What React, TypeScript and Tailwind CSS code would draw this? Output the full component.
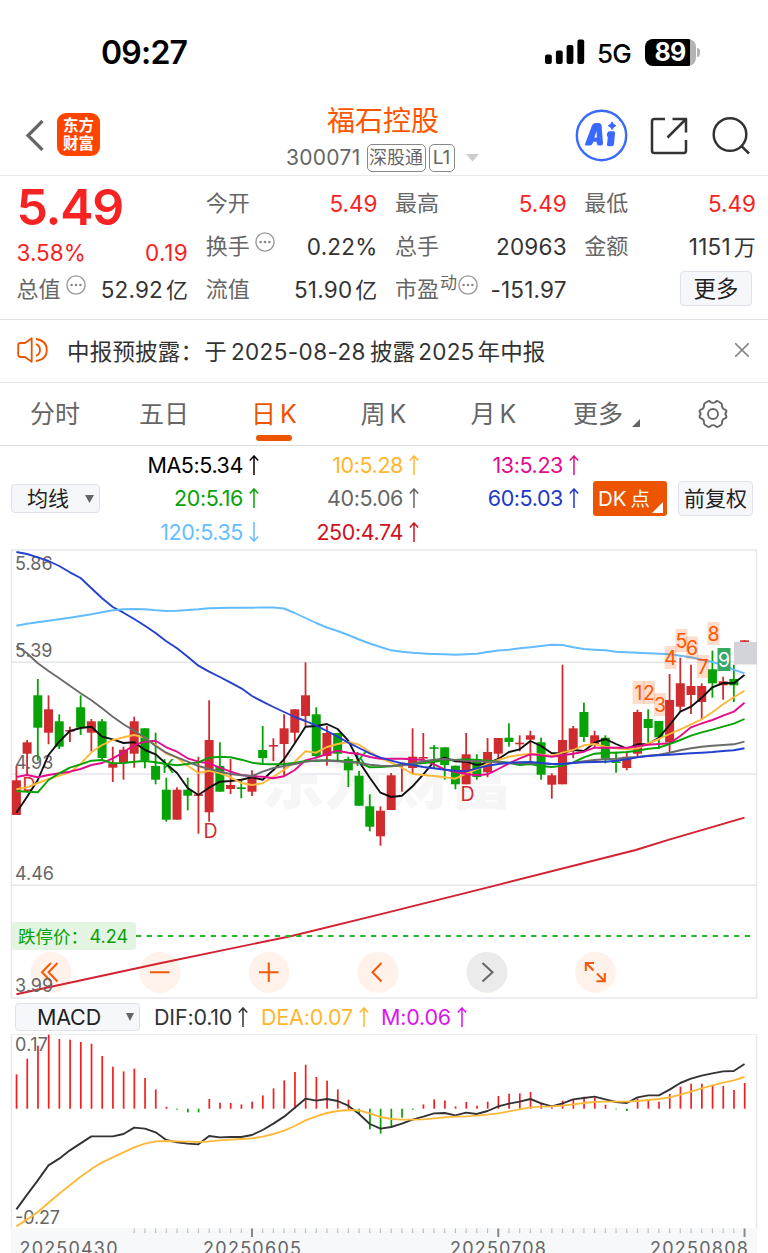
import React from 'react';

type Candle = ['r' | 'g', number, number, number, number];

const UP = '#d02c2f';
const DOWN = '#06a206';

// x of the n-th trading day
const dayX = (i: number) => 16.4 + i * 10.708;

// [colour, high, body top, body bottom, low]
const candles: Candle[] = [
  ['r', 766, 780.3, 815, 815], ['r', 740, 742.3, 753.7, 775], ['g', 679, 695.3, 727.7, 760.7],
  ['r', 695.3, 709.3, 732.7, 744.3], ['g', 714.3, 721.3, 746.7, 749], ['r', 726.7, 730, 731.5, 742],
  ['g', 695.3, 707.3, 727.7, 735], ['r', 719, 721.3, 732.7, 751.7], ['g', 719, 721.3, 758, 760],
  ['r', 746.7, 763.3, 767.7, 782], ['r', 746.7, 749.7, 763, 779.7], ['r', 716.7, 721.3, 753.7, 767.7],
  ['g', 728.3, 728.3, 760.7, 768.3], ['g', 732.7, 766, 779.7, 784.3], ['g', 777.7, 789.7, 819.7, 821.7],
  ['r', 787.3, 789.7, 819.7, 819.7], ['g', 777.7, 789.7, 795.7, 810.3], ['r', 756.7, 794.3, 795.7, 833.7],
  ['r', 700.3, 740, 812.3, 821.7], ['g', 742.3, 766, 791.7, 791.7], ['r', 759, 785, 789, 794],
  ['g', 780.3, 787.3, 789, 798.3], ['r', 770.3, 775, 791.7, 796], ['g', 726, 750, 758, 765],
  ['r', 738.3, 745, 746.5, 761], ['r', 714.3, 728.3, 744, 775.7], ['r', 709.3, 709.3, 732.7, 742.7],
  ['r', 662.3, 695.3, 716, 726], ['g', 707.3, 714.3, 756, 758.3], ['r', 726, 733, 756, 765.7],
  ['g', 733, 733, 753.7, 760], ['g', 756.7, 759, 770.3, 787], ['g', 771, 775.7, 805.7, 805.7],
  ['g', 794.3, 806.3, 826.7, 831.3], ['r', 806.3, 810.7, 836.3, 845.7], ['r', 773, 775.3, 810, 810],
  ['r', 763.3, 763.7, 764.5, 791.7], ['r', 728.3, 756.7, 768, 774.3], ['r', 733, 757, 758.5, 763.7],
  ['g', 745, 747.3, 748.7, 768.3], ['g', 747.3, 747.3, 765, 779.7], ['g', 765.7, 765.7, 784.3, 789.3],
  ['r', 733, 754.3, 784.3, 784.3], ['g', 754.3, 759, 777, 779.7], ['r', 738, 752, 772.3, 777.3],
  ['r', 738, 738, 753.7, 760], ['g', 723.3, 737.7, 742, 746.7], ['r', 735.3, 742.7, 744, 751.3],
  ['r', 730.7, 735.3, 739.7, 763.3], ['g', 737.7, 742.3, 774.7, 779.7], ['r', 773.3, 775.3, 784.7, 798.7],
  ['r', 664.7, 740, 784.3, 784.3], ['r', 726, 728.3, 749.7, 758.3], ['g', 702.7, 712, 737, 742],
  ['r', 730.7, 735.3, 744, 748.3], ['g', 735.3, 737.7, 758.7, 763.3], ['g', 751.7, 761.3, 763, 772.7],
  ['r', 751.7, 756.7, 768, 770.3], ['r', 709.7, 712, 753.7, 756], ['g', 709.3, 719, 728, 743.3],
  ['g', 721, 721, 737.3, 749], ['r', 674, 700, 742.3, 753.3], ['r', 657.7, 683.3, 706.7, 711.7],
  ['r', 664.7, 686, 695, 714], ['r', 683.3, 686, 702, 720], ['g', 650.7, 669.3, 683.3, 697.7],
  ['r', 676.7, 681.3, 685.3, 699.7], ['g', 664.7, 679, 685.3, 702], ['r', 640.3, 640.3, 641.8, 641.8],
];

const ma5 = [812.7, 796.7, 780, 755, 741.7, 731, 728, 726.7, 736.7, 739.3, 743, 742.3, 750, 754.3, 764, 773, 788, 795, 787.7, 781.7, 781, 779.7, 777.3, 779.7, 770, 759.3, 743.3, 726.7, 726, 724, 729, 740.7, 761.7, 777.7, 792.7, 797, 795.7, 786.3, 774.3, 761.7, 757.7, 761.3, 761.7, 765, 763.3, 759, 752, 749.3, 741, 746, 753.3, 753, 750, 751, 742.7, 739, 744, 748.7, 744.3, 744, 737.7, 725, 711.7, 706.7, 697.7, 687.3, 683, 683.3, 675];
const ma10 = [789.3, 787.3, 783, 779, 775.7, 772.3, 764, 752.3, 745, 740, 737.3, 735, 737.7, 745, 753.7, 757.7, 765.7, 773, 770.7, 773, 777.3, 783, 785, 783.3, 776.7, 769.7, 761.7, 751.3, 752.7, 747, 744, 742, 744.7, 751.7, 758.3, 762.7, 767.7, 774, 775, 776, 777.3, 778.7, 773.7, 769.3, 763.3, 760, 756.7, 755, 753.7, 754.7, 755.7, 752.7, 750, 745.3, 744, 746.7, 748.3, 749.3, 748.3, 743.3, 739, 734, 729.3, 724.3, 719.3, 712.3, 704.3, 697.3, 690.7];
const ma13 = [777, 775, 777.3, 775, 773.3, 771.7, 769, 765, 763, 758.3, 752.3, 745, 741.7, 740.7, 747.3, 751.7, 758.3, 761.7, 763.3, 767.7, 771.7, 775, 776.3, 776.7, 778.3, 776.3, 770, 760.3, 757.7, 754, 750.7, 752.7, 754, 757, 758.7, 758.7, 758.7, 759.3, 760, 764.3, 769.3, 772, 774, 775.3, 774.3, 769, 763.3, 758.3, 754.3, 755.3, 756.7, 755.3, 753.7, 751.7, 747.7, 747.7, 747.7, 747.7, 746.3, 744.7, 744, 743.3, 736, 727.3, 723.3, 720, 715.7, 711.7, 702.7];
const ma20 = [791, 791.7, 792.3, 780, 773.3, 767.7, 764.3, 760.7, 760, 763.3, 763, 761.7, 761, 762.3, 764, 765.3, 764, 762.3, 757.7, 756.7, 757.3, 759.7, 762.7, 764, 764.3, 764, 763, 761, 761, 760.3, 760.7, 761.7, 762.3, 767.3, 767, 766.3, 765, 764, 763, 761.7, 760.3, 760, 759.3, 760, 760.7, 761.7, 762.7, 765, 764, 766, 767, 765.7, 762.3, 757.3, 753.7, 752.7, 752.7, 752, 750.7, 748.7, 747.7, 744, 740, 735.7, 732.3, 729.7, 726.7, 723.7, 719];
const ma40 = [646, 653.3, 663.3, 671, 678.3, 685.7, 693.3, 700.3, 708.3, 716.7, 724.3, 730.7, 737.7, 746, 752.7, 757.3, 761.7, 766, 769, 771.7, 774, 775.3, 776, 771.7, 768, 766, 764, 761.7, 760.3, 760.7, 761.3, 762, 763, 764.7, 765.7, 766, 765.3, 763.7, 761.3, 759.7, 759, 760, 760.7, 761, 761.7, 761.7, 763.3, 763.3, 763, 763.3, 764, 763.7, 762.7, 761.3, 760, 759.3, 758.7, 757.7, 757, 755.7, 754.7, 752.7, 750.3, 748.3, 746.7, 745.7, 745, 744.3, 741.7];
const ma60 = [552, 554, 557.3, 561, 566, 572.3, 578, 588.3, 598.3, 607, 612.7, 619, 625.7, 633, 641.3, 648.3, 656.7, 665.7, 671.7, 677, 682.7, 688.3, 696, 701.7, 707, 712, 717, 721, 725.7, 731, 736.7, 742.7, 748, 753.3, 757.7, 760.7, 763.3, 765, 767, 768.3, 769.7, 770.7, 771.3, 768.3, 765.7, 764, 762.7, 762.3, 762, 763, 764, 764, 763, 762.3, 762, 761.7, 760.7, 759.3, 757.3, 756, 755.3, 754.7, 754, 753.3, 752.7, 752, 751, 750.3, 748.3];
const ma120 = [625.7, 623.7, 622.3, 620.7, 619.3, 617.7, 616, 614.3, 612.3, 610.3, 609.3, 609, 609.3, 610.3, 611, 610.7, 610, 609.3, 608.3, 608, 607.7, 607.7, 607.7, 607.5, 607.5, 608.5, 613, 618, 623, 627.5, 631, 635, 639.5, 643.5, 647, 650.3, 651.7, 652.8, 653.5, 654, 654.3, 654.7, 654.3, 653.7, 652, 650.5, 649.7, 648.3, 647.3, 646, 644.7, 645, 647.3, 649, 649.7, 650.3, 651.7, 652.3, 652.7, 653.3, 653.7, 654.3, 655.7, 657.3, 659.7, 662, 665.3, 669.7, 673.3];

const macdBars = [34.3, 50, 63, 74, 69.7, 69, 66.7, 65, 52.7, 42, 37.3, 40, 30.7, 19.3, 2, -1, -3.7, -3.7, 9.7, 6, 5.7, 4.3, 7, 13.3, 20.3, 28.3, 36.7, 44, 31.7, 28, 19.3, 9, -5.3, -20.7, -25, -18, -9, -1, 4.3, 9.3, 8.3, 2.3, 6.7, 3, 7, 12.7, 15, 15.3, 16.7, 6, 1.3, 8, 9.7, 12, 11.3, 4, -0.7, -2.3, 10.3, 9.3, 7, 14.7, 22, 25, 25, 23, 22.7, 18.7, 25.7];
const dif = [538, 494, 451, 406, 386, 361, 340, 319, 319, 319, 312, 293, 296, 307, 330, 337, 341, 343, 318, 322, 321, 321, 315, 300, 281, 260, 233, 206, 212, 207, 213, 227, 252, 282, 296, 291, 281, 269, 260, 250, 249, 256, 248, 252, 243, 229, 221, 215, 207, 220, 229, 220, 208, 204, 200, 208, 216, 219, 202, 196, 196, 179, 159, 146, 137, 130, 124, 123, 102];
const dea = [589, 568, 546, 518, 491, 466, 440, 417, 397, 382, 367, 352, 341, 334, 333, 334, 335, 336, 334, 331, 329, 327, 325, 320, 312, 302, 288, 271, 259, 249, 243, 240, 241, 250, 261, 267, 269, 269, 268, 265, 262, 260, 259, 257, 254, 250, 244, 238, 232, 230, 229, 227, 223, 219, 216, 215, 215, 215, 213, 210, 207, 202, 194, 185, 175, 166, 158, 151, 141];

const toPoints = (ys: number[]) => ys.map((y, i) => `${dayX(i).toFixed(1)},${y}`).join(' ');
const macdY = (v: number) => 1030 + v / 3;

const nineTurns = [
  { n: '1', x: 638.5, y: 692.5 }, { n: '2', x: 649, y: 692.5 }, { n: '3', x: 660, y: 704.5 },
  { n: '4', x: 670.5, y: 657.5 }, { n: '5', x: 681.5, y: 640.5 }, { n: '6', x: 692, y: 648 },
  { n: '7', x: 703, y: 666.5 }, { n: '8', x: 713.5, y: 633.5 },
];

function Line({ ys, color }: { ys: number[]; color: string }) {
  return <polyline points={toPoints(ys)} fill="none" stroke={color} strokeWidth="1.9" strokeLinejoin="round" />;
}

function Dots() {
  return (
    <svg className="w-5 h-5 shrink-0" viewBox="0 0 20 20" fill="none" stroke="#999" strokeWidth="1.4">
      <circle cx="10" cy="10" r="9.1" />
      <g fill="#888" stroke="none">
        <circle cx="5.6" cy="10" r="1.3" />
        <circle cx="10" cy="10" r="1.3" />
        <circle cx="14.4" cy="10" r="1.3" />
      </g>
    </svg>
  );
}

function Arrow({ down = false }: { down?: boolean }) {
  return (
    <svg
      className={down ? 'w-[10px] h-5 ml-[6px] shrink-0 rotate-180' : 'w-[10px] h-5 ml-[6px] shrink-0'}
      viewBox="0 0 10 20"
      fill="none"
      stroke="currentColor"
      strokeWidth="1.5"
    >
      <path d="M5 20V1M0.8 5.6L5 1l4.2 4.6" />
    </svg>
  );
}

function StatusBar() {
  return (
    <div className="h-[96px] pl-[101px] pr-[68px] pt-[9px] flex items-center justify-between text-black">
      <span className="text-[32px] font-semibold tracking-[-0.8px]">09:27</span>
      <div className="flex items-center -mt-px">
        <svg className="w-[40px] h-[26px]" viewBox="0 0 40 26">
          <rect x="0" y="15.5" width="6.8" height="9.5" rx="2" />
          <rect x="10.9" y="11.5" width="6.8" height="13.5" rx="2" />
          <rect x="21.6" y="6" width="6.8" height="19" rx="2" />
          <rect x="32.4" y="0.5" width="6.8" height="24.5" rx="2" />
        </svg>
        <span className="ml-[12px] mt-[2px] text-[26px] font-medium tracking-[-0.8px]">5G</span>
        <div className="ml-[14px] flex items-center">
          <div className="w-[51px] h-[27px] rounded-[8px] overflow-hidden bg-gradient-to-r from-black from-[89%] to-[#b3b3b3] to-[89%] flex items-center justify-center">
            <span className="text-white text-[25px] leading-[27px] font-bold tracking-[-0.8px] pr-px">89</span>
          </div>
          <div className="ml-[1px] w-[3px] h-[9px] rounded-r-full bg-[#b3b3b3]" />
        </div>
      </div>
    </div>
  );
}

function Header() {
  return (
    <div className="h-[80px] border-b-[1.5px] border-[#e8e8e8] relative flex items-start justify-between">
      <div className="flex items-center pl-[25px] pt-[17px]">
        <svg className="w-[20px] h-[32px]" viewBox="0 0 20 32" fill="none" stroke="#666" strokeWidth="3.2">
          <path d="M17.5 2L3 16.5L17.5 31" />
        </svg>
        <div className="ml-[12px] w-[43px] h-[43px] rounded-[9px] bg-[#ff4400] text-white text-[15.5px] leading-[17.5px] font-bold flex flex-col items-center justify-center">
          <span>东方</span>
          <span>财富</span>
        </div>
      </div>
      <div className="absolute left-[286px] top-[7px] w-[194px] flex flex-col items-center">
        <h1 className="text-[28px] leading-[36px] text-[#ff5500]">福石控股</h1>
        <div className="mt-[5px] flex items-center text-[#666] w-full">
          <span className="text-[21px] leading-[28px] tracking-[0.3px]">300071</span>
          <span className="ml-[6px] w-[59px] h-[28px] border-[1.5px] border-[#888] rounded-[5px] text-[18px] leading-[25px] text-center whitespace-nowrap">深股通</span>
          <span className="ml-[3px] w-[26px] h-[28px] border-[1.5px] border-[#888] rounded-[5px] text-[19px] leading-[25px] text-center">L1</span>
          <svg className="ml-[11px] w-[13px] h-[8px]" viewBox="0 0 13 8" fill="#ccc"><path d="M0 0h13L6.5 7.5z" /></svg>
        </div>
      </div>
      <div className="flex items-center pr-[17px] pt-[13px]">
        <svg className="w-[53px] h-[53px]" viewBox="0 0 53 53">
          <circle cx="26.5" cy="26.500" r="24.700" fill="none" stroke="#3a69ff" strokeWidth="2.400" />
          <path d="M10.200 34.500L17 16.500Q18 14 20.500 14H24Q26.300 14 26.600 16.500L28 34.500Q28 36.600 26 36.600H24Q22 36.600 21.800 34.500L21.700 32.800H18.300L17.500 34.800Q16.800 36.600 15 36.600H11.500Q9.500 36.600 10.200 34.500zM19.400 28.400H21.900L21.500 22z" fill="#3a69ff" fillRule="evenodd" />
          <path d="M34.200 22.300H38.400Q40.300 22.300 40.100 24.200L38.900 35.500Q38.700 37.300 36.900 37.300H33.600Q31.800 37.300 32 35.500L32.800 28.300Q30.900 25.800 33 22.800z" fill="#3a69ff" />
          <path d="M37.100 12.900q.9 2.900 3.800 3.800-2.900.9-3.800 3.800-.9-2.900-3.800-3.800 2.900-.9 3.800-3.800z" fill="#3a69ff" stroke="#3a69ff" strokeWidth="1" />
        </svg>
        <svg className="ml-[22px] w-[38px] h-[38px]" viewBox="0 0 38 38" fill="none" stroke="#333" strokeWidth="2.500" strokeLinejoin="round">
          <path d="M15 2H4.200Q2 2 2 4.200V33.800Q2 36 4.200 36H33.800Q36 36 36 33.800V23" />
          <path d="M22.500 2H36V15.500M35.500 2.500L17.500 20.500" />
        </svg>
        <svg className="ml-[23px] w-[40px] h-[40px]" viewBox="0 0 40 40" fill="none" stroke="#333" strokeWidth="2.500">
          <circle cx="19" cy="18.500" r="16.300" />
          <path d="M30.500 30.200l7.500 7.300" />
        </svg>
      </div>
    </div>
  );
}

function Cell({ label, value, info, sup, red, tone }: { label: string; value: string; info?: boolean; sup?: string; red?: boolean; tone?: string }) {
  return (
    <div className="h-[43px] flex items-center justify-between whitespace-nowrap">
      <div className="flex items-center text-[#666]">
        <span className="text-[22px]">{label}</span>
        {sup && <span className="text-[17px] relative -top-[6px] -mr-[4px] ml-px">{sup}</span>}
        {info && <span className="ml-[5px] relative -top-[5px]"><Dots /></span>}
      </div>
      <span className={red ? 'text-[22.5px] text-[#f72222]' : 'text-[22.5px] tracking-[0.2px] text-[#333]'}>
        {value}
        {tone && <span className="text-[22px] ml-[3px]">{tone}</span>}
      </span>
    </div>
  );
}

function Quote() {
  return (
    <div className="h-[144px] pl-[16.5px] pr-[12px] pt-[6px] border-b-[1.5px] border-[#e2e2e2] grid grid-cols-4 gap-x-[17.5px]">
      <div>
        <div className="h-[50px] text-[50px] leading-[51px] font-semibold text-[#f72222] tracking-[-1.2px]">5.49</div>
        <div className="h-[36px] pt-[5px] flex items-center justify-between text-[22.5px] text-[#f72222]">
          <span>3.58%</span>
          <span className="tracking-[0.5px]">0.19</span>
        </div>
        <Cell label="总值" info value="52.92" tone="亿" />
      </div>
      <div>
        <Cell label="今开" value="5.49" red />
        <Cell label="换手" info value="0.22%" />
        <Cell label="流值" value="51.90" tone="亿" />
      </div>
      <div>
        <Cell label="最高" value="5.49" red />
        <Cell label="总手" value="20963" />
        <Cell label="市盈" sup="动" info value="-151.97" />
      </div>
      <div>
        <Cell label="最低" value="5.49" red />
        <Cell label="金额" value="1151" tone="万" />
        <div className="flex justify-end pt-[3px] pr-[4px]">
          <button className="w-[72px] h-[35px] border border-[#dfe2e8] rounded-[4px] bg-[#f6f7fa] text-[22.5px] leading-[33px] text-[#222]">更多</button>
        </div>
      </div>
    </div>
  );
}

function Notice() {
  return (
    <div className="h-[63px] pl-[17px] pr-[19px] border-b-[1.5px] border-[#e8e8e8] flex items-center">
      <svg className="w-[32px] h-[26px] -mt-[2px]" viewBox="0 0 32 26" fill="none" stroke="#ec5400" strokeWidth="1.8" strokeLinejoin="round">
        <path d="M14.700 1.200V24.800L8 20H3.500Q1.200 20 1.200 17.800V8.200Q1.200 6 3.500 6H8z" />
        <path d="M19 7.200q4 1.600 4 5.800t-4 5.800M19 2q10.800 1.500 10.800 11T19 24" />
      </svg>
      <span className="ml-[18px] mt-[2px] text-[22.5px] text-[#333] tracking-[0.2px] whitespace-nowrap">
        中报预披露：<span className="ml-[1px]">于</span>
        <span className="mx-[4px] text-[22.5px] tracking-[0.4px]">2025-08-28</span>披露
        <span className="mx-[3px] text-[22.5px]">2025</span>年中报
      </span>
      <svg className="ml-auto w-[14px] h-[14px] -mt-[3px]" viewBox="0 0 14 14" stroke="#888" strokeWidth="1.600">
        <path d="M0 0L14 14M14 0L0 14" />
      </svg>
    </div>
  );
}

function Tabs() {
  const tabs = [
    { name: '分时', left: 'ml-[29px] w-[52px]' },
    { name: '五日', left: 'ml-[57px] w-[52px]' },
    { name: '日 K', left: 'ml-[61px] w-[46px]', active: true },
    { name: '周 K', left: 'ml-[62px] w-[49px]' },
    { name: '月 K', left: 'ml-[60px] w-[51px]' },
    { name: '更多', left: 'ml-[53px] w-[52px]' },
  ];
  return (
    <div className="h-[63px] border-b-[1.5px] border-[#dcdcdc] flex items-center text-[25px] text-[#666] whitespace-nowrap">
      {tabs.map((t) => (
        <div key={t.name} className={`${t.left} h-full relative flex items-center justify-center shrink-0`}>
          <span className={t.active ? 'pt-[2px] [word-spacing:-3px] text-[#ec5400]' : 'pt-[2px] [word-spacing:-3px]'}>{t.name}</span>
          {t.active && <span className="absolute bottom-[4px] w-[36px] h-[6px] rounded-full bg-[#ec5400]" />}
        </div>
      ))}
      <svg className="ml-[8px] mt-[18px] w-[8px] h-[8px]" viewBox="0 0 8 8" fill="#666"><path d="M8 0V8H0z" /></svg>
      <svg className="ml-[58px] w-[30px] h-[30px]" viewBox="0 0 30 30" fill="none" stroke="#666" strokeWidth="1.900" strokeLinejoin="round">
        <path d="M9.500 2.500Q11.500 1.500 12.500 3Q15 4.800 17.500 3Q18.500 1.500 20.500 2.500L23.200 4.200Q24.300 5 24 6.800Q24 9.800 27 10.700Q28.800 11.200 28.300 13Q26.500 15 28.300 17Q28.800 18.800 27 19.300Q24 20.200 24 23.200Q24.300 25 23.200 25.800L20.500 27.500Q18.500 28.500 17.500 27Q15 25.200 12.500 27Q11.500 28.500 9.500 27.500L6.800 25.800Q5.700 25 6 23.200Q6 20.200 3 19.300Q1.200 18.800 1.700 17Q3.500 15 1.700 13Q1.200 11.200 3 10.700Q6 9.800 6 6.800Q5.700 5 6.800 4.200z" />
        <circle cx="15" cy="15" r="5" />
      </svg>
    </div>
  );
}

function Legend() {
  const cls = 'h-[33.5px] flex items-center justify-end text-[21.5px] tracking-[-0.4px] font-[375] whitespace-nowrap';
  return (
    <div className="h-[103px] flex items-start pl-[11px] pr-[14px]">
      <button className="mt-[38px] w-[89px] h-[29px] border border-[#dfe2e8] rounded-[4px] bg-[#f6f7fa] flex items-center text-[21px] text-[#222] pl-[15px] pr-[5px] justify-between">
        <span>均线</span>
        <svg className="w-[9px] h-[8px]" viewBox="0 0 9 8" fill="#666"><path d="M0 0H9L4.500 8z" /></svg>
      </button>
      <div className="ml-[40px] mt-[2px] w-[119px]">
        <div className={`${cls} text-black`}>MA5:5.34<Arrow /></div>
        <div className={`${cls} text-[#06a206]`}>20:5.16<Arrow /></div>
        <div className={`${cls} text-[#66bdff]`}>120:5.35<Arrow down /></div>
      </div>
      <div className="ml-[41px] mt-[2px] w-[119px]">
        <div className={`${cls} text-[#ffb62e]`}>10:5.28<Arrow /></div>
        <div className={`${cls} text-[#666]`}>40:5.06<Arrow /></div>
        <div className={`${cls} text-[#d0121f]`}>250:4.74<Arrow /></div>
      </div>
      <div className="ml-[41px] mt-[2px] w-[119px]">
        <div className={`${cls} text-[#e20c8c]`}>13:5.23<Arrow /></div>
        <div className={`${cls} text-[#2038c8]`}>60:5.03<Arrow /></div>
      </div>
      <button className="relative ml-[14px] mt-[35px] w-[74px] h-[35px] rounded-[3px] bg-[#ec5400] text-white text-[20.5px] text-left pl-[5px] leading-[35px] whitespace-nowrap">
        DK<span className="ml-[4px] text-[19.500px]">点</span>
        <svg className="absolute right-[4px] bottom-[3px] w-[11px] h-[11px]" viewBox="0 0 11 11" fill="#fff"><path d="M11 0V11H0z" /></svg>
      </button>
      <button className="ml-[11px] mt-[35px] w-[75px] h-[35px] shrink-0 border border-[#dfe2e8] rounded-[4px] bg-[#f6f7fa] text-[21px] leading-[33px] text-[#222] whitespace-nowrap">前复权</button>
    </div>
  );
}

function CandleChart() {
  return (
    <svg className="block w-[768px] h-[450px]" viewBox="0 549 768 450" fontSize="18" fontFamily='Inter, "Noto Sans CJK SC", sans-serif'>
      {/* frame and price grid */}
      <rect x="11.500" y="550" width="745" height="448" fill="none" stroke="#e6e8ee" strokeWidth="1.5" />
      <path d="M12 662.300H756M12 774H756M12 885.300H756" stroke="#e4e6ee" strokeWidth="1.5" />
      <text x="261" y="803" fontSize="63" fontWeight="900" fill="#f6f6f6">东方财富</text>

      <g fontSize="18">
        <text x="22.500" y="791" fill={UP}>D</text>
        <text x="162" y="773" fill={DOWN}>K</text>
        <text x="355" y="766" fill={DOWN}>K</text>
      </g>
      <g fill="#666">
        <text x="15" y="570">5.86</text>
        <text x="15" y="656.500">5.39</text>
        <text x="15" y="768.500">4.93</text>
        <text x="15" y="880">4.46</text>
      </g>

      {candles.map(([c, high, top, bottom, low], i) => (
        <g key={i} fill={c === 'r' ? UP : DOWN}>
          <rect x={dayX(i) - 0.9} y={high} width="1.8" height={low - high} />
          <rect x={dayX(i) - 4.500} y={top} width="9" height={Math.max(bottom - top, 1.6)} />
        </g>
      ))}

      <Line ys={ma5} color="#111" />
      <Line ys={ma10} color="#fdb93a" />
      <Line ys={ma13} color="#e20c8c" />
      <Line ys={ma20} color={DOWN} />
      <Line ys={ma40} color="#6b6b6b" />
      <Line ys={ma60} color="#2540cf" />
      <Line ys={ma120} color="#63bcff" />
      <polyline points="16.400,994.300 160,963.300 291.700,936 384,913.300 500,884.300 635.700,850 670,839.300 744.500,817.700" fill="none" stroke="#d42030" strokeWidth="1.900" />

      <rect x="734" y="642" width="23" height="22.500" fill="#d2d4da" />
      <g fill={UP} fontSize="19.500">
        <text x="203.500" y="838">D</text>
        <text x="460.500" y="800.500">D</text>
      </g>
      {nineTurns.map((t) => (
        <rect key={t.n} x={t.x - 6} y={t.y - 11.500} width="12" height="23" fill="#ff5500" fillOpacity="0.2" />
      ))}
      {nineTurns.map((t) => (
        <text key={t.n} x={t.x} y={t.y + 7.200} fontSize="19.500" textAnchor="middle" fill="#ff5500">{t.n}</text>
      ))}
      <rect x="717.500" y="648" width="13" height="23" fill="#35a862" />
      <text x="724" y="666.700" fontSize="19.500" textAnchor="middle" fill="#fff">9</text>

      {/* limit-down price */}
      <path d="M136 936H752" stroke="#2cb52c" strokeWidth="2" strokeDasharray="5.300 5.380" />
      <rect x="12" y="922" width="124" height="28" rx="3" fill="#e3f4e3" />
      <text x="18" y="943" fill={DOWN} fontSize="17.500">跌停价：</text>
      <text x="89.500" y="943" fill={DOWN} fontSize="18">4.24</text>

      {/* chart controls */}
      <g fill="#ff5500" fillOpacity="0.08">
        <circle cx="51" cy="972.300" r="20.500" />
        <circle cx="160" cy="972.300" r="20.500" />
        <circle cx="269" cy="972.300" r="20.500" />
        <circle cx="378" cy="972.300" r="20.500" />
        <circle cx="595.500" cy="972.300" r="20.500" />
      </g>
      <circle cx="487" cy="972.300" r="20.500" fill="#ebebeb" />
      <g fill="none" stroke="#f05a0a" strokeWidth="2">
        <path d="M51 963L42 972.300L51 981.500M57.500 963L48.500 972.300L57.500 981.500" />
        <path d="M150 972.300H169.500M259 972.300H278.500M268.800 962.500V982" />
        <path d="M381.500 963L372.500 972.300L381.500 981.500" />
        <path d="M585.800 971V963H594M586 963L593.500 970.500M604.800 973V981.200H596.500M604.500 981L597 973.500" />
        <path d="M482.500 963L492.500 972.300L482.500 981.500" stroke="#666" />
      </g>
      <text x="15" y="992" fill="#666">3.99</text>
    </svg>
  );
}

function MacdBar() {
  return (
    <div className="h-[35px] pl-[15px] pt-px flex items-center text-[21.500px] tracking-[-0.2px] whitespace-nowrap">
      <button className="w-[125px] h-[28px] border border-[#dfe2e8] rounded-[4px] bg-[#f6f7fa] flex items-center justify-between pl-[21px] pr-[5px] text-[#222]">
        <span>MACD</span>
        <svg className="w-[8px] h-[8px]" viewBox="0 0 8 8" fill="#666"><path d="M0 0H8L4 8z" /></svg>
      </button>
      <div className="ml-[14px] w-[94px] flex items-center justify-between text-[#333] font-[375]">DIF:0.10<Arrow /></div>
      <div className="ml-[13px] w-[107px] flex items-center justify-between text-[#ffb62e] font-[375]">DEA:0.07<Arrow /></div>
      <div className="ml-[13px] w-[85px] flex items-center justify-between text-[#dc14ec] font-[375]">M:0.06<Arrow /></div>
    </div>
  );
}

function MacdChart() {
  const major = [22, 45, 68];
  return (
    <svg className="block w-[768px] h-[219px]" viewBox="0 1034 768 219" fontSize="18" fontFamily="Inter, sans-serif">
      <rect x="11" y="1228" width="746" height="25" fill="#f7f8fa" />
      <path d="M11.500 1228V1034H756.500V1228" fill="none" stroke="#e6e8ee" strokeWidth="1.500" />
      <g fill="#666">
        <text x="15" y="1051" textLength="33">0.17</text>
        <text x="15" y="1223.500" textLength="45">-0.27</text>
      </g>
      {macdBars.map((h, i) => (
        <rect
          key={i}
          x={dayX(i) - 0.7}
          y={h > 0 ? 1108.700 - h : 1108.700}
          width="1.700"
          height={Math.abs(h)}
          fill={h > 0 ? '#f51d1d' : DOWN}
        />
      ))}
      <Line ys={dif.map(macdY)} color="#333" />
      <Line ys={dea.map(macdY)} color="#fdb93a" />
      {candles.map((_, i) =>
        i < 11 ? null : (
          <path
            key={i}
            d={`M${dayX(i)} 1228.500V${major.includes(i) ? 1237 : 1233}`}
            stroke={major.includes(i) ? '#888' : '#bbb'}
            strokeWidth={major.includes(i) ? 2 : 1.1}
          />
        )
      )}
      <g fill="#666">
        <text x="19.500" y="1254.500" textLength="98">20250430</text>
        <text x="203" y="1254.500" textLength="98">20250605</text>
        <text x="450" y="1254.500" textLength="96">20250708</text>
        <text x="650" y="1254.500" textLength="98">20250808</text>
      </g>
    </svg>
  );
}

export default function App() {
  return (
    <div className="w-[768px] h-[1253px] overflow-hidden bg-white font-[Inter,'Noto_Sans_CJK_SC',sans-serif]">
      <StatusBar />
      <Header />
      <Quote />
      <Notice />
      <Tabs />
      <Legend />
      <CandleChart />
      <MacdBar />
      <MacdChart />
    </div>
  );
}
